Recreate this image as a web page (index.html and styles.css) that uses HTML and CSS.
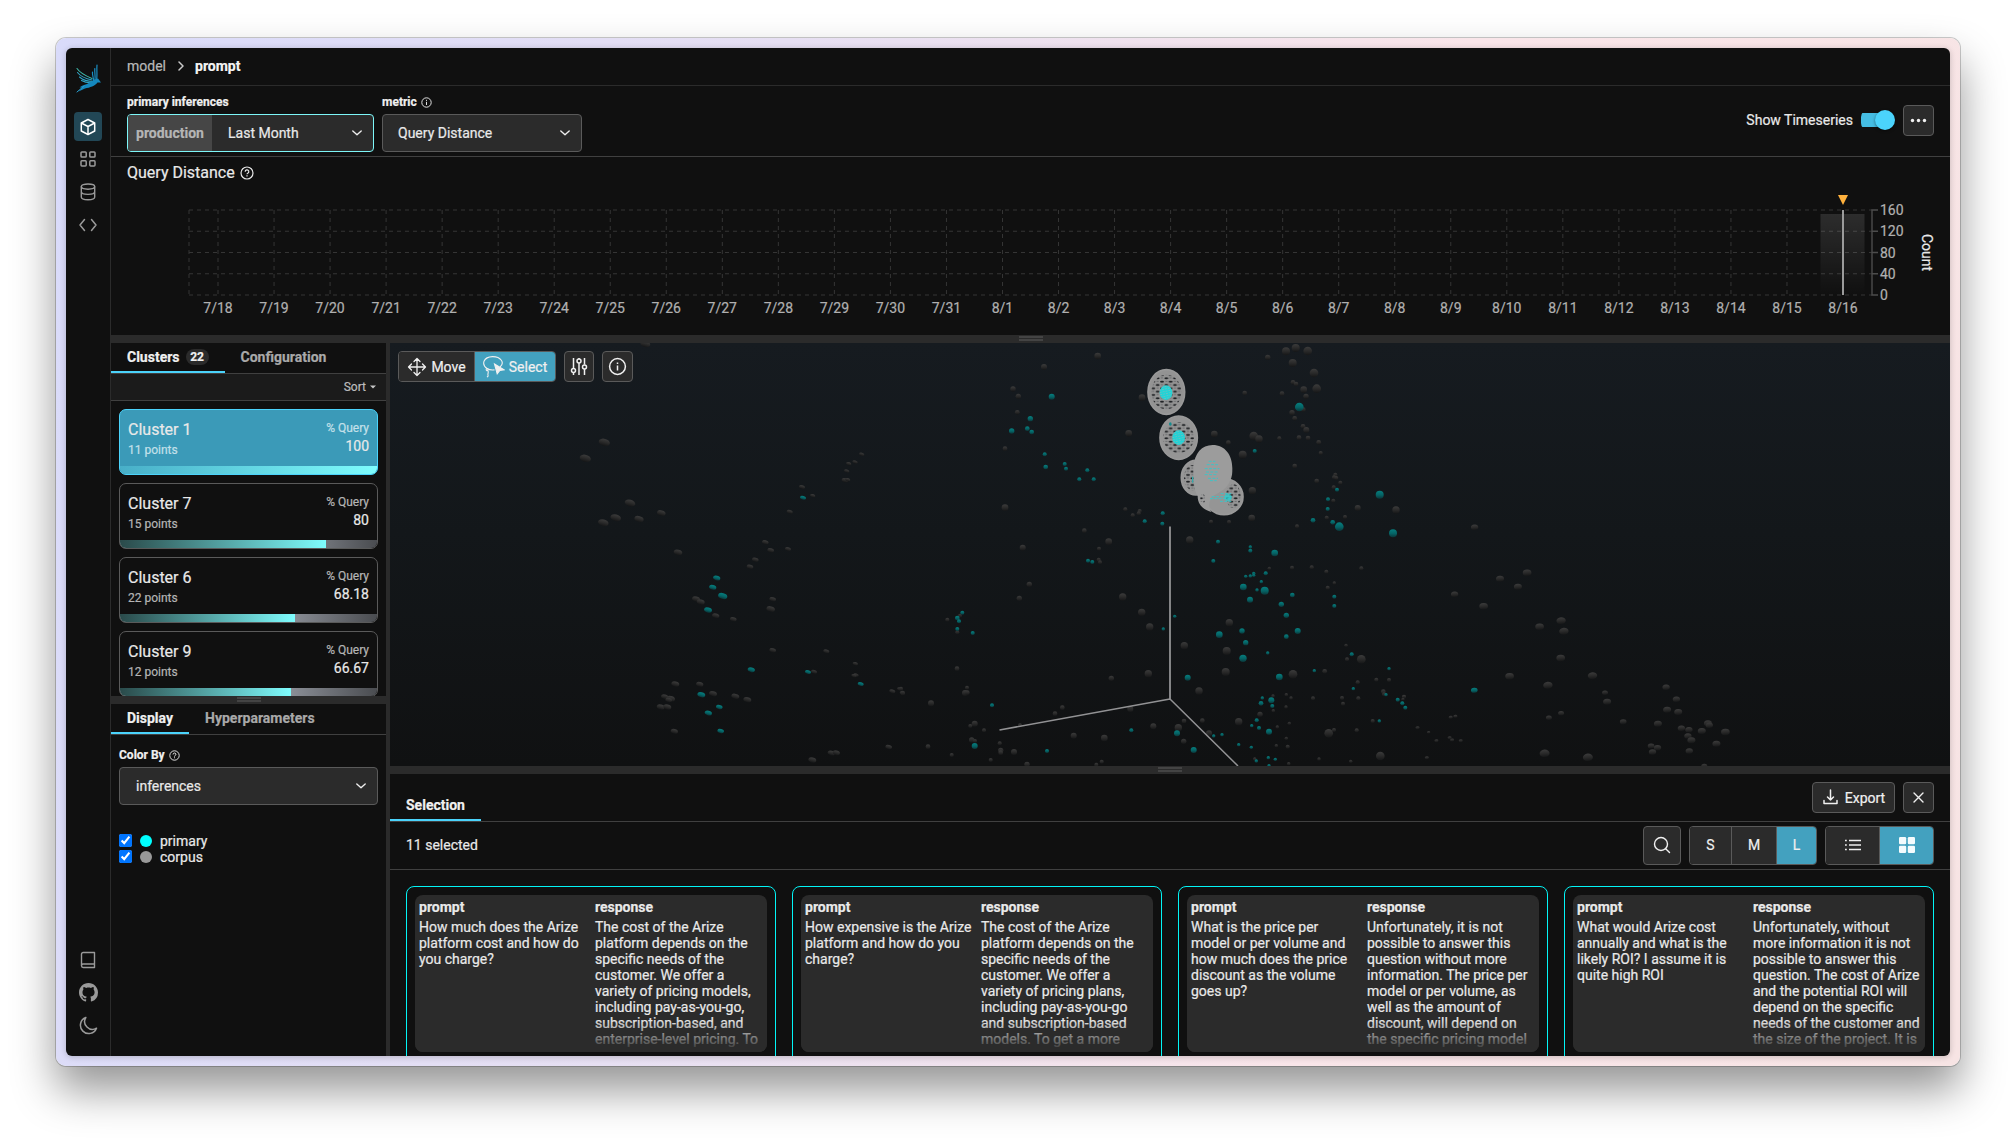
FILE: index.html
```html
<!DOCTYPE html>
<html lang="en">
<head>
<meta charset="utf-8">
<title>Phoenix</title>
<link rel="stylesheet" href="styles.css">
</head>
<body>
<div class="frame">
<div class="app">
  <nav class="side">
    <svg class="logo" width="27" height="30" viewBox="74 63 27 30" fill="none" stroke-linecap="round">
      <g stroke="#2ea3c4" stroke-width="1.1"><path d="M76 68.500C79 73 85 76 91 78.500" stroke="#3fb6a8"/><path d="M76.500 72.500C80 77 86 79 91 80"/><path d="M78.500 77C82 80 87 81.500 92 81.500"/><path d="M80.500 80.500C84 82.500 88 83 92 82.500"/></g>
      <g stroke="#1a8fc4" stroke-width="1.200"><path d="M96 65C95.500 70 96.500 76 95.500 80"/><path d="M93.800 68.500C93.500 73 94.500 76 94 80"/><path d="M91.500 72C91 76 93 78 92.500 81"/></g>
      <path d="M100 82.500L97 78.500C93 79 90 82 86 84C83 85 80 86 78.500 87.500L81 87.500L77.500 91.500L84 88.500C89 87.500 94 86 96.500 82.500Z" fill="#1488be"/>
      <path d="M76 92L83 86" stroke="#2b9fce"/>
    </svg>
    <div class="side-group">
      <span class="side-item active"><svg width="18" height="18" viewBox="0 0 18 18" fill="none" stroke="currentColor" stroke-width="1.500" stroke-linejoin="round"><path d="M9 1.500L15.700 5v8L9 16.500L2.300 13V5z"/><path d="M2.300 5L9 8.500L15.700 5M9 8.500v8"/></svg></span>
      <span class="side-item"><svg width="16" height="16" viewBox="0 0 16 16" fill="none" stroke="currentColor" stroke-width="1.500"><rect x="1" y=".9" width="5.200" height="5.200" rx=".9"/><rect x="9.800" y=".9" width="5.200" height="5.200" rx=".9"/><rect x="1" y="9.800" width="5.200" height="5.200" rx=".9"/><rect x="9.800" y="9.800" width="5.200" height="5.200" rx=".9"/></svg></span>
      <span class="side-item"><svg width="16" height="18" viewBox="0 0 16 18" fill="none" stroke="currentColor" stroke-width="1.400"><ellipse cx="8" cy="3.600" rx="6.700" ry="2.600"/><path d="M1.300 3.600v10.500c0 1.500 3 2.700 6.700 2.700s6.700-1.200 6.700-2.700V3.600M1.300 8.800c0 1.500 3 2.600 6.700 2.600s6.700-1.100 6.700-2.600"/></svg></span>
      <span class="side-item"><svg width="18" height="14" viewBox="0 0 18 14" fill="none" stroke="currentColor" stroke-width="1.500" stroke-linecap="round" stroke-linejoin="round"><path d="M5.500 1.500L1 7l4.500 5.500M12.500 1.500L17 7l-4.500 5.500"/></svg></span>
    </div>
    <div class="side-group bottom">
      <span class="side-item book"><svg width="16" height="18" viewBox="0 0 16 18" fill="none" stroke="currentColor" stroke-width="1.400" stroke-linejoin="round"><path d="M14.500 13H3.200C2.200 13 1.500 13.800 1.500 14.800S2.200 16.500 3.200 16.500H14.500V1.500H3.200C2.200 1.500 1.500 2.200 1.500 3.200v11.500"/></svg></span>
      <span class="side-item"><svg width="19" height="19" viewBox="0 0 16 16" fill="currentColor"><path d="M8 0C3.580 0 0 3.580 0 8c0 3.540 2.290 6.530 5.470 7.590.4.070.550-.170.550-.380 0-.190-.010-.820-.010-1.490-2.010.370-2.530-.490-2.690-.940-.090-.230-.480-.940-.820-1.130-.280-.150-.680-.520-.010-.530.630-.010 1.080.580 1.230.820.720 1.210 1.870.870 2.330.660.070-.520.280-.870.510-1.070-1.780-.2-3.640-.890-3.640-3.950 0-.870.310-1.590.820-2.150-.080-.2-.360-1.020.080-2.120 0 0 .670-.210 2.200.820.640-.180 1.320-.270 2-.270s1.360.090 2 .270c1.530-1.040 2.200-.820 2.200-.820.440 1.100.160 1.920.080 2.120.510.560.820 1.270.820 2.150 0 3.070-1.870 3.750-3.650 3.950.290.250.540.730.540 1.480 0 1.070-.010 1.930-.010 2.200 0 .210.150.460.550.380A8.010 8.010 0 0 0 16 8c0-4.420-3.580-8-8-8z"/></svg></span>
      <span class="side-item"><svg width="19" height="19" viewBox="0 0 19 19" fill="none" stroke="currentColor" stroke-width="1.500" stroke-linejoin="round"><path d="M6.800 1.500A8.300 8.300 0 1 0 17.500 12.200A7.800 7.800 0 0 1 6.800 1.500z"/></svg></span>
    </div>
  </nav>

  <div class="page">
    <header class="crumbs">
      <span>model</span>
      <svg width="6" height="10" viewBox="0 0 6 10" fill="none" stroke="#c8c8c8" stroke-width="1.500" stroke-linecap="round" stroke-linejoin="round"><path d="M1 1l4 4-4 4"/></svg>
      <b>prompt</b>
    </header>

    <div class="toolbar">
      <div class="field">
        <div class="label">primary inferences</div>
        <div class="select primary"><span class="addon">production</span><span class="value">Last Month</span><svg class="chev" width="12" height="12" viewBox="0 0 12 12"><path d="M1.800 4L6 7.800L10.200 4"/></svg></div>
      </div>
      <div class="field">
        <div class="label">metric <svg width="11" height="11" viewBox="0 0 11 11" fill="none" stroke="#e0e0e0"><circle cx="5.500" cy="5.500" r="4.700"/><path d="M5.500 4.800V8M5.500 2.800v1.100"/></svg></div>
        <div class="select metric"><span class="value">Query Distance</span><svg class="chev" width="12" height="12" viewBox="0 0 12 12"><path d="M1.800 4L6 7.800L10.200 4"/></svg></div>
      </div>
      <div class="tool-right">
        <span>Show Timeseries</span>
        <span class="toggle"><span class="knob"></span></span>
        <button class="btn square"><svg width="17" height="5" viewBox="0 0 17 5" fill="#f2f2f2"><circle cx="2.500" cy="2.500" r="1.700"/><circle cx="8.500" cy="2.500" r="1.700"/><circle cx="14.500" cy="2.500" r="1.700"/></svg></button>
      </div>
    </div>

    <section class="chart">
      <h1>Query Distance <svg width="14" height="14" viewBox="0 0 14 14" fill="none" stroke="#e8e8e8" stroke-width="1.200"><circle cx="7" cy="7" r="6"/><path d="M5.200 5.700a1.800 1.800 0 1 1 2.600 1.500q-.8.400-.8 1.100M7 9.300v1.200"/></svg></h1>
      <svg class="plot" id="plot" width="1839" height="154" viewBox="111 181 1839 154">
        <defs><linearGradient id="bar" x1="0" y1="0" x2="0" y2="1"><stop offset="0" stop-color="#fff" stop-opacity=".12"/><stop offset="1" stop-color="#fff" stop-opacity="0"/></linearGradient></defs>
        <g id="grid" class="grid"></g>
        <rect x="1820.500" y="214" width="44" height="81" fill="url(#bar)"/>
        <path d="M1878 210h-6v85h6M1872 231.250h6M1872 252.500h6M1872 273.750h6" class="axis"/>
        <path d="M1843 210v85" stroke="#9b9b9b" stroke-width="2"/>
        <path d="M1838 195h10l-5 10z" fill="#ffb13d"/>
        <g id="ticks" class="ticks"></g>
        <text class="count" transform="translate(1922 252.500) rotate(90)">Count</text>
      </svg>
    </section>
    <div class="handle"><i></i></div>

    <div class="body">
      <aside class="left">
        <section class="clusters">
          <div class="tabs"><span class="tab on">Clusters <em>22</em></span><span class="tab">Configuration</span></div>
          <div class="sort">Sort <svg width="6" height="4" viewBox="0 0 6 4"><path d="M0 .5h6L3 3.500z" fill="#c8c8c8"/></svg></div>
          <div class="list">
            <div class="cluster sel"><div class="info"><div><h2>Cluster 1</h2><p>11 points</p></div><div class="num"><p>% Query</p><strong>100</strong></div></div><div class="bar"><span style="width:100%"></span></div></div>
            <div class="cluster"><div class="info"><div><h2>Cluster 7</h2><p>15 points</p></div><div class="num"><p>% Query</p><strong>80</strong></div></div><div class="bar"><span style="width:80%"></span></div></div>
            <div class="cluster"><div class="info"><div><h2>Cluster 6</h2><p>22 points</p></div><div class="num"><p>% Query</p><strong>68.18</strong></div></div><div class="bar"><span style="width:68.180%"></span></div></div>
            <div class="cluster"><div class="info"><div><h2>Cluster 9</h2><p>12 points</p></div><div class="num"><p>% Query</p><strong>66.67</strong></div></div><div class="bar"><span style="width:66.670%"></span></div></div>
          </div>
        </section>
        <div class="handle"><i></i></div>
        <section class="display">
          <div class="tabs"><span class="tab on">Display</span><span class="tab">Hyperparameters</span></div>
          <div class="display-body">
            <div class="label">Color By <svg width="11" height="11" viewBox="0 0 14 14" fill="none" stroke="#e8e8e8" stroke-width="1.200"><circle cx="7" cy="7" r="6"/><path d="M5.200 5.700a1.800 1.800 0 1 1 2.600 1.500q-.8.400-.8 1.100M7 9.300v1.200"/></svg></div>
            <div class="select"><span class="value">inferences</span><svg class="chev" width="12" height="12" viewBox="0 0 12 12"><path d="M1.800 4L6 7.800L10.200 4"/></svg></div>
            <div class="legend">
              <label><input type="checkbox" checked><i class="dot cyan"></i>primary</label>
              <label><input type="checkbox" checked><i class="dot gray"></i>corpus</label>
            </div>
          </div>
        </section>
      </aside>
      <div class="vhandle"></div>

      <main class="right">
        <div class="cloud">
          <svg class="points" width="1560" height="423" viewBox="0 0 1560 423">
            <defs>
              <linearGradient id="gr" x1="0" y1="0" x2="0" y2="1"><stop offset="0" stop-color="#3b3b3b"/><stop offset=".5" stop-color="#2a2a2a"/><stop offset="1" stop-color="#151617"/></linearGradient>
              <linearGradient id="te" x1="0" y1="0" x2="0" y2="1"><stop offset="0" stop-color="#067e7e"/><stop offset=".55" stop-color="#056365"/><stop offset="1" stop-color="#0b3538"/></linearGradient>
              <pattern id="mesh" width="26" height="20" patternUnits="userSpaceOnUse"><g fill="#1f2124"><ellipse cx="6" cy="5" rx="6" ry="3"/><ellipse cx="19" cy="15" rx="6" ry="3"/></g><path d="M16 4h6M2 14h7" stroke="#55585b" stroke-width="2"/></pattern>
              <pattern id="lines" width="9" height="7" patternUnits="userSpaceOnUse" patternTransform="rotate(-12)"><path d="M0 1h6" stroke="#8fb4b4" stroke-width="1.800"/></pattern>
            </defs>
            <g id="cloud"></g>
            <g class="axes"><path d="M780 183.500V356" stroke-width="1.800"/><path d="M609.500 387L780 356M780 356L848 423" stroke-width="1.500"/></g>
            <g transform="translate(510 -3) scale(.33333)" id="spheres">
              <g stroke="#999" stroke-width="5">
                <ellipse cx="799" cy="156" rx="55" ry="67" fill="#939393"/><ellipse cx="799" cy="156" rx="45" ry="52" fill="url(#mesh)" stroke="none"/>
                <ellipse cx="836" cy="293" rx="56" ry="65" fill="#959595"/><ellipse cx="836" cy="293" rx="46" ry="46" fill="url(#mesh)" stroke="none"/>
                <ellipse cx="888" cy="413" rx="44" ry="52" fill="#959595"/><ellipse cx="878" cy="413" rx="26" ry="38" fill="url(#mesh)" stroke="none"/>
                <ellipse cx="972" cy="470" rx="57" ry="54" fill="#959595"/><ellipse cx="1000" cy="468" rx="22" ry="36" fill="url(#mesh)" stroke="none"/>
              </g>
              <path d="M938 315C975 315 997 345 997 385C997 400 997 410 990 422C985 440 965 455 935 470C925 490 925 505 935 516C905 508 893 490 893 468C880 450 880 405 880 380C884 340 905 315 938 315z" fill="#9c9c9c"/>
              <ellipse cx="908" cy="476" rx="7" ry="14" fill="url(#mesh)"/>
              <g fill="#22d3d6"><ellipse cx="798" cy="158" rx="19" ry="22"/><ellipse cx="836" cy="293" rx="19" ry="22"/></g>
              <g fill="url(#lines)"><ellipse cx="798" cy="158" rx="19" ry="22"/><ellipse cx="836" cy="293" rx="19" ry="22"/></g>
              <g stroke="#3fc3c6" stroke-width="3" stroke-dasharray="9 4" fill="none"><path d="M926 364h20M920 374h34M914 386h44M918 396h36M914 404h38M924 415h30M930 422h20"/><path d="M962 461h32M935 470h60M930 476h66M960 484h34"/></g>
              <ellipse cx="984" cy="472" rx="11" ry="11" fill="#27cfd2" opacity=".7"/><path d="M878 410v18" stroke="#3aa" stroke-width="4"/>
              <ellipse cx="811" cy="252" rx="4" ry="5" fill="#158d90"/>
            </g>
          </svg>
          <div class="cloud-tools">
            <div class="group">
              <button class="btn"><svg width="20" height="20" viewBox="0 0 20 20" fill="none" stroke="currentColor" stroke-width="1.300" stroke-linecap="round" stroke-linejoin="round"><path d="M10 1.500v17M1.500 10h17M7 4.500l3-3 3 3M7 15.500l3 3 3-3M4.500 7l-3 3 3 3M15.500 7l3 3-3 3"/></svg>Move</button>
              <button class="btn on"><svg width="23" height="23" viewBox="0 0 23 23" fill="none" stroke="currentColor" stroke-width="1.100"><path d="M5 13.500C-1 9 1.500 2 10.500 1.600C19 1.500 23 8 18 12M5 13.500c2 1.400 4.500 1.700 7.500 1.400"/><path d="M5 13.500c-1.500.5-.8 2.500.5 2s.4-2-.5-2M5.800 15.500c1.500 2-.5 3 .2 4.500s-.5 1.500-1 2"/><path d="M12.500 9l9.500 5.800-4.200.6-2.600 3.400z" fill="currentColor"/></svg>Select</button>
            </div>
            <button class="btn square30"><svg width="18" height="19" viewBox="0 0 18 19" fill="none" stroke="currentColor" stroke-width="1.500"><path d="M3.500 1v10.500M3.500 16v2M9 1v1M9 6v12M14.500 1v6.500M14.500 12v6"/><circle cx="3.500" cy="13.500" r="2"/><circle cx="9" cy="4" r="2"/><circle cx="14.500" cy="10" r="2"/></svg></button>
            <button class="btn square"><svg width="19" height="19" viewBox="-.5 -.5 19 19" fill="none" stroke="currentColor" stroke-width="1.500"><circle cx="9" cy="9" r="7.900"/><path d="M9 8v5M9 5v1.600"/></svg></button>
          </div>
        </div>
        <div class="handle"><i></i></div>
        <section class="selection">
          <div class="tabs tall"><span class="tab on">Selection</span>
            <div class="actions"><button class="btn export"><svg width="17" height="17" viewBox="-.5 0 17 17" fill="none" stroke="currentColor" stroke-width="1.500" stroke-linecap="round" stroke-linejoin="round"><path d="M8 1v10M5 8l3 3 3-3M1.500 11.500v3h13v-3"/></svg>Export</button><button class="btn square"><svg width="13" height="13" viewBox="0 0 13 13" stroke="currentColor" stroke-width="1.400" stroke-linecap="round"><path d="M2 2l9 9M11 2l-9 9"/></svg></button></div>
          </div>
          <div class="subbar">
            <span class="grow">11 selected</span>
            <button class="btn search"><svg width="18" height="18" viewBox="0 0 18 18" fill="none" stroke="currentColor" stroke-width="1.400" stroke-linecap="round"><circle cx="8" cy="8" r="6.500"/><path d="M12.700 12.700L16.500 16.500"/></svg></button>
            <div class="group sizes"><button class="btn s">S</button><button class="btn m">M</button><button class="btn l on">L</button></div>
            <div class="group views"><button class="btn"><svg width="16" height="12" viewBox="0 0 16 12" stroke="currentColor" stroke-width="1.500"><path d="M4 1.500h12M4 6h12M4 10.500h12M0 1.500h1.800M0 6h1.800M0 10.500h1.800"/></svg></button><button class="btn on"><svg width="16" height="16" viewBox="0 0 16 16" fill="#f4fbfd"><rect width="7.200" height="7.200" rx="1.300"/><rect x="8.800" width="7.200" height="7.200" rx="1.300"/><rect y="8.800" width="7.200" height="7.200" rx="1.300"/><rect x="8.800" y="8.800" width="7.200" height="7.200" rx="1.300"/></svg></button></div>
          </div>
          <div class="cards">
            <article><div class="doc"><div><b>prompt</b><p>How much does the Arize platform cost and how do you charge?</p></div><div><b>response</b><p>The cost of the Arize platform depends on the specific needs of the customer. We offer a variety of pricing models, including pay-as-you-go, subscription-based, and enterprise-level pricing. To</p></div></div></article>
            <article><div class="doc"><div><b>prompt</b><p>How expensive is the Arize platform and how do you charge?</p></div><div><b>response</b><p>The cost of the Arize platform depends on the specific needs of the customer. We offer a variety of pricing plans, including pay-as-you-go and subscription-based models. To get a more</p></div></div></article>
            <article><div class="doc"><div><b>prompt</b><p>What is the price per model or per volume and how much does the price discount as the volume goes up?</p></div><div><b>response</b><p>Unfortunately, it is not possible to answer this question without more information. The price per model or per volume, as well as the amount of discount, will depend on the specific pricing model</p></div></div></article>
            <article><div class="doc"><div><b>prompt</b><p>What would Arize cost annually and what is the likely ROI? I assume it is quite high ROI</p></div><div><b>response</b><p>Unfortunately, without more information it is not possible to answer this question. The cost of Arize and the potential ROI will depend on the specific needs of the customer and the size of the project. It is</p></div></div></article>
          </div>
        </section>
      </main>
    </div>
  </div>
</div>
</div>
<script src="charts.js"></script>
</body>
</html>
```
FILE: styles.css
```css
* { box-sizing: border-box; }
body { margin: 0; width: 2016px; height: 1140px; padding: 38px 56px; background: #fff; overflow: hidden; font: 14px/16px Roboto, "Liberation Sans", sans-serif; color: #e9e9e9; -webkit-text-stroke: .2px; }
h1, h2, p { margin: 0; font-weight: 400; }
svg { display: block; flex: none; }
button { font: inherit; color: inherit; margin: 0; }

.frame { width: 1904px; height: 1028px; padding: 10px; border-radius: 10px; background: linear-gradient(100deg, #d9dbfa 0%, #e6dff2 35%, #f9e5e9 68%, #f7e4e4 100%); box-shadow: 0 0 0 1px rgba(0,0,0,.2), 0 24px 44px rgba(0,0,0,.42); }
.app { width: 1884px; height: 1008px; display: flex; overflow: hidden; border-radius: 6px; background: #101010; box-shadow: 0 1px 6px rgba(0,0,0,.2); }

.side { width: 45px; border-right: 1px solid #2b2b2b; display: flex; flex-direction: column; align-items: center; padding: 15px 0 17px; flex: none; }
.logo { margin-bottom: 19px; }
.side-group { display: flex; flex-direction: column; gap: 5px; }
.side-group.bottom { margin-top: auto; }
.side-item { width: 28px; height: 28px; border-radius: 4px; display: flex; align-items: center; justify-content: center; color: #9a9a9a; }
.side-item.active { background: #224756; color: #fff; height: 29px; margin-bottom: -1px; }
.side-item.book { padding-top: 2px; }

.page { flex: 1; display: flex; flex-direction: column; min-width: 0; }
.crumbs { height: 38px; flex: none; border-bottom: 1px solid #2b2b2b; padding: 0 0 2px 16px; display: flex; align-items: center; color: #b8b8b8; }
.crumbs svg { margin: 0 11px 0 12px; }
.crumbs b { color: #f4f4f4; font-weight: 700; }

.toolbar { height: 71px; flex: none; border-bottom: 1px solid #404040; padding: 8px 16px 4px; display: flex; gap: 8px; }
.label { height: 16px; margin-bottom: 4px; font-size: 12px; font-weight: 700; display: flex; align-items: center; gap: 4px; color: #f0f0f0; }
.select { height: 38px; border: 1px solid #5a5a5a; border-radius: 4px; background: #2b2b2b; display: flex; align-items: center; padding-right: 10px; overflow: hidden; }
.select .value { flex: 1; padding-left: 16px; }
.select.primary { width: 247px; border-color: #7df6f8; }
.select.metric { width: 200px; }
.select.metric .value { padding-left: 15px; }
.addon { height: 100%; width: 84px; padding-left: 8px; background: #464646; color: #b5b5b5; font-weight: 700; display: flex; align-items: center; }
.chev { fill: none; stroke: #ededed; stroke-width: 1.4; stroke-linecap: round; stroke-linejoin: round; }
.tool-right { margin: -8px 0 -3px auto; padding-bottom: 1px; display: flex; align-items: center; }
.toggle { width: 34px; height: 20px; margin: 0 8px; display: flex; align-items: center; justify-content: flex-end; background: linear-gradient(#45bde3, #45bde3) 0 50% / 30px 14px no-repeat; border-radius: 7px 10px 10px 7px; }
.knob { width: 20px; height: 20px; border-radius: 50%; background: #4bd3fb; box-shadow: 0 1px 3px rgba(0,0,0,.5); }

.btn { height: 31px; padding: 0; border: 1px solid #5a5a5a; border-radius: 4px; background: #2b2b2b; color: #f0f0f0; display: flex; align-items: center; justify-content: center; flex: none; }
.square { width: 31px; }
.square30 { width: 30px; }
.group { display: flex; border: 1px solid #5a5a5a; border-radius: 4px; overflow: hidden; }
.group .btn { border: 0; border-radius: 0; height: 100%; }
.group .btn + .btn { border-left: 1px solid #5a5a5a; }
.btn.on { background: #43a1bf; }

.chart { height: 178px; flex: none; padding-top: 8px; }
.chart h1 { height: 16px; font-size: 16px; display: flex; align-items: center; gap: 5px; padding-left: 16px; }
.grid { stroke: #353535; stroke-dasharray: 4 4; fill: none; }
.axis { stroke: #4c4c4c; stroke-width: 1.4; fill: none; }
.ticks text { fill: #b0b0b0; stroke: #b0b0b0; stroke-width: .2px; font-size: 14px; }
.count { fill: #e9e9e9; stroke: #e9e9e9; stroke-width: .2px; font-size: 14px; text-anchor: middle; }

.handle { height: 8px; flex: none; background: #2b2b2b; display: flex; justify-content: center; padding-top: 2px; }
.handle i { width: 24px; height: 5px; border: solid #444; border-width: 2px 0; margin-top: -1px; }
.body { flex: 1; display: flex; min-height: 0; }
.left { width: 275px; flex: none; display: flex; flex-direction: column; }
.vhandle { width: 4px; background: #2b2b2b; flex: none; }

.tabs { height: 31px; flex: none; border-bottom: 1px solid #404040; display: flex; align-items: flex-end; }
.tab { height: 30px; padding: 0 16px; border-bottom: 2px solid transparent; font-weight: 700; color: #a9a9a9; display: flex; align-items: center; gap: 6px; }
.tab.on { color: #f0f0f0; border-color: #4bd3fb; }
.tab em { font-style: normal; font-size: 12px; width: 23px; text-align: center; border-radius: 8px; background: #2b2b2b; }

.clusters { height: 353px; flex: none; display: flex; flex-direction: column; overflow: hidden; }
.sort { height: 27px; flex: none; background: #1b1b1b; border-bottom: 1px solid #404040; display: flex; align-items: center; justify-content: flex-end; gap: 4px; padding-right: 10px; font-size: 12px; color: #bdbdbd; }
.list { padding: 8px; display: flex; flex-direction: column; gap: 8px; }
.cluster { height: 66px; flex: none; border: 1px solid #5a5a5a; border-radius: 7px; overflow: hidden; display: flex; flex-direction: column; }
.info { flex: 1; display: flex; justify-content: space-between; padding: 10px 8px 0; }
.info p { font-size: 12px; line-height: 14px; color: #b5b5b5; }
.info h2 { font-size: 16px; line-height: 19px; }
.info h2 + p { margin-top: 4px; }
.num { text-align: right; padding-top: 1px; }
.num strong { display: block; font-weight: 400; line-height: 16px; margin-top: 3px; }
.bar { height: 8px; background: linear-gradient(90deg, #c5c9d2 0%, #8b8f97 66%, #4a4c50 100%); }
.bar span { display: block; height: 100%; background: linear-gradient(90deg, #2a4a4a, #7efcfd); }
.sel { background: #3b9ab8; border-color: #4bd3fb; }
.sel .info p { color: #c4e0ea; }
.sel .bar span { background: linear-gradient(90deg, #48afc8, #7efcfd); }

.display-body { padding: 12px 8px; }
.legend { margin-top: 28px; display: flex; flex-direction: column; }
.legend label { display: flex; align-items: center; height: 16px; }
.legend input { margin: 0 8px 2px 0; width: 13px; height: 13px; }
.dot { width: 12px; height: 12px; border-radius: 50%; margin-right: 8px; }
.cyan { background: #0ff; }
.gray { background: #999; }

.right { flex: 1; display: flex; flex-direction: column; min-width: 0; }
.cloud { height: 423px; flex: none; position: relative; background: linear-gradient(#161b20, #13171a 45%, #101112); }
.axes { stroke: #929294; fill: none; }
.cloud-tools { position: absolute; left: 8px; top: 8px; display: flex; gap: 8px; }
.cloud-tools .group { width: 158px; height: 31px; }
.cloud-tools .group .btn { width: 75px; gap: 4px; }
.cloud-tools .group .btn.on { width: 81px; padding-right: 1px; }

.selection { flex: 1; display: flex; flex-direction: column; min-height: 0; }
.tabs.tall { height: 48px; }
.actions { margin-left: auto; align-self: flex-start; padding: 8px 16px 0 0; display: flex; gap: 8px; }
.export { width: 83px; gap: 6px; }
.subbar { height: 48px; flex: none; border-bottom: 1px solid #404040; display: flex; align-items: center; padding: 0 16px; gap: 8px; }
.grow { flex: 1; padding-bottom: 1px; }
.search { width: 38px; height: 39px; }
.subbar .group { height: 39px; }
.subbar .btn { padding-bottom: 1px; }
.subbar .s { width: 41px; }
.subbar .m { width: 45px; }
.subbar .l { width: 40px; }
.views .btn { width: 53px; }
.views .btn.on { width: 54px; }
.cards { flex: 1; min-height: 0; overflow: hidden; padding: 16px 16px 0; display: grid; grid-template-columns: repeat(4, 370px); gap: 16px; grid-auto-rows: 220px; }
.cards article { border: 1px solid #03f4f5; border-radius: 8px; padding: 8px; }
.doc { height: 157px; border-radius: 8px; background: #2b2b2b; overflow: hidden; display: grid; grid-template-columns: 1fr 1fr; position: relative; }
.doc > div { padding: 4px; }
.doc b { display: block; padding: 0 0 4px; }
.doc::after { content: ""; position: absolute; left: 0; right: 0; bottom: 0; height: 32px; background: linear-gradient(rgba(43,43,43,0), #2b2b2b); }
```
FILE: charts.js
```js
const NS = 'http://www.w3.org/2000/svg';
function add(parent, tag, attrs, text) {
  const el = document.createElementNS(NS, tag);
  for (const k in attrs) el.setAttribute(k, attrs[k]);
  if (text !== undefined) el.textContent = text;
  parent.appendChild(el);
  return el;
}

// Time series grid and tick labels
const grid = document.getElementById('grid');
const ticks = document.getElementById('ticks');
for (let i = 0; i < 5; i++) {
  const y = 210 + i * 21.25;
  add(grid, 'path', { d: `M189 ${y}H1872` });
  add(ticks, 'text', { x: 1880, y: y + 5 }, String(160 - i * 40));
}
add(grid, 'path', { d: 'M189 210V295' });
for (let i = 0; i < 30; i++) {
  const x = 218 + i * 56.035;
  const day = i < 14 ? `7/${18 + i}` : `8/${i - 13}`;
  add(grid, 'path', { d: `M${x} 210V295` });
  add(ticks, 'text', { x, y: 313, 'text-anchor': 'middle' }, day);
}

// Embedding points, grouped by the part of the scene they lie in: x y radius
const scene = document.getElementById('cloud');
const parts = [
  { x: 0, sx: 3, flat: 0.62, tilt: 14,
    corpus: '766 12 15,643 307 17,586 355 17,720 489 16,814 519 13,677 533 16,640 548 16,747 537 14,864 637 13,1415 343 8,1395 366 8,1376 371 8,1370 393 8,1365 421 10,1373 419 8,1236 441 9,1268 467 8,1199 515 9,1126 607 10,1142 631 10,1194 627 9,1096 659 10,1080 680 10,918 777 12,932 786 12,977 827 11,1030 838 10,1148 778 10,1142 807 13,1148 931 10,1309 934 9,1396 971 8,1398 1005 8,1392 1007 8,1272 995 9,856 1032 12,929 1033 11,969 1061 12,824 1070 11,842 1076 13,836 1080 10,812 1101 12,832 1101 12,1036 1069 12,1072 1079 12,853 1174 11,1507 1054 9,1529 1047 8,1537 1059 8,1496 1221 10,1324 1239 11,1339 1238 11,1267 1260 12',
    primary: '1239 473 9,980 714 11,968 742 11,998 768 14,954 810 12,1084 989 11,1254 996 9,1412 1032 9,934 1064 12,988 1101 10,955 1119 11,992 1173 10' },
  { x: 510, sx: 3, flat: 1, tilt: 0,
    corpus: '593 48 10,432 81 9,339 147 8,355 169 8,352 217 7,315 326 7,726 173 10,686 280 10,943 282 10,985 308 7,1158 34 12,1187 24 12,1223 33 13,1103 52 8,1178 69 12,1242 99 13,1179 127 7,1188 132 7,1250 146 13,1211 149 10,1218 169 8,1146 161 7,1034 159 7,1176 218 8,1210 209 7,1184 235 7,1209 259 7,1219 270 9,1061 288 13,1077 297 11,1138 295 6,1197 293 7,1224 294 7,1256 307 7,1028 344 12,1262 339 6,1184 378 7,1306 404 6,1302 412 6,1309 414 6,1321 428 6,1301 442 6,1250 423 7,1057 452 11,1300 482 6,1373 504 9,1488 510 11,1280 533 6,1335 531 6,1191 559 6,1055 534 10,315 503 10,676 508 6,719 513 6,716 520 6,698 526 6,933 545 6,987 546 6,553 572 7,626 605 10,869 600 11,368 623 9,597 626 6,596 659 6,600 667 6,388 733 8,358 775 8,668 771 11,725 817 11,749 861 11,988 848 11,142 839 6,180 827 6,172 877 6,853 917 11,980 933 12,171 986 7,977 996 12,1179 1003 13,745 1001 11,634 1015 8,897 1053 11,201 1043 6,195 1059 9,202 1058 7,93 1090 9,3 1046 6,8 1059 7,487 1103 7,465 1121 7,691 1107 9,360 1156 6,224 1151 9,211 1158 6,252 1171 6,760 1159 9,835 1163 11,852 1143 7,907 1142 7,1016 1145 11,1080 1123 8,927 1180 9,613 1194 10,521 1187 9,851 1204 8,215 1200 8,225 1203 6,84 1220 7,299 1210 6,302 1231 8,302 1238 7,342 1236 9,155 1245 6,272 1260 6,381 1273 8,589 1274 6,605 1265 6,1108 685 5,1176 683 6,1235 682 6,1279 695 6,1384 685 6,1303 729 5,1283 743 6,1338 916 5,1341 958 6,1384 958 13,1274 994 7,1429 1019 6,1467 1020 6,1373 1027 6,1119 1068 5,1159 1064 5,1173 1074 5,1158 1101 5,1120 1112 5,1239 1075 6,1326 1074 6,1375 1075 6,1329 1091 6,1450 1055 7,1452 1063 6,1512 1070 6,1168 1150 5,1132 1161 5,1159 1195 5,1129 1217 5,1163 1220 6,1302 1170 6,1286 1180 13,1370 1171 6,1418 1143 6,1441 1248 13,1257 1257 5,1352 1264 5,1166 1271 5,1064 1257 5',
    primary: '455 170 9,391 236 8,335 273 8,382 266 7,395 276 7,434 343 6,437 381 7,494 372 6,498 386 6,562 391 6,538 418 6,581 418 6,1198 201 13,1064 333 6,1311 449 6,1284 478 6,1283 507 6,1298 547 7,1318 560 13,1439 464 12,1479 580 12,1239 541 7,788 520 6,734 544 6,787 551 6,954 605 6,940 663 6,1051 621 5,1051 632 6,1124 639 10,564 662 6,577 666 6,1037 709 5,1051 708 5,1061 700 5,1061 706 5,1097 700 6,1084 725 5,1030 741 10,1094 752 12,1071 750 5,1050 779 9,1177 765 7,1144 793 8,1159 826 8,1303 770 6,1303 798 6,187 818 6,172 834 7,177 844 6,172 867 6,218 879 6,824 829 5,790 867 5,958 884 10,1026 873 8,1037 908 8,1193 873 9,1159 890 7,1029 955 11,1103 939 5,1355 943 6,863 1013 9,1138 1011 10,1243 992 5,1467 986 5,1360 1046 5,276 1096 6,1114 1081 9,1087 1074 5,1083 1090 7,1117 1098 6,1070 1141 6,1055 1157 5,1077 1164 6,1107 1175 9,831 1180 9,694 1171 6,941 1188 5,966 1184 5,1016 1214 5,1054 1222 5,224 1218 9,441 1233 6,881 1230 9,1105 1253 5,1126 1258 5,1069 1263 5,1107 1277 5,1438 1143 5,1458 1064 5,1493 1079 6,1507 1090 6,1516 1103 6' },
  { x: 1010, sx: 2.8, flat: 0.75, tilt: -4,
    corpus: '209 562 11,356 698 13,280 716 12,330 740 12,153 763 11,234 799 13,451 842 14,391 860 13,459 874 14,450 954 13,307 1009 13,539 1007 14,414 1036 14,574 1058 9,580 1085 12,451 1120 9,417 1133 9,625 1145 10,745 1042 11,774 1078 11,748 1109 12,779 1116 12,722 1151 12,788 1165 11,809 1169 11,845 1173 12,862 1150 12,866 1156 11,911 1176 13,806 1188 11,816 1201 12,886 1211 12,703 1218 10,721 1223 11,707 1236 11,810 1233 11,405 1240 15,526 1252 15,11 1070 6,8 1078 5,142 1132 6,155 1129 6,49 1163 6,80 1177 5,102 1202 6,139 1193 6,146 1200 6,170 1202 6,75 1253 6,852 1278 9',
    primary: '208 1051 10' }
];
for (const part of parts) {
  for (const [kind, fill] of [['corpus', 'url(#gr)'], ['primary', 'url(#te)']]) {
    for (const item of part[kind].split(',')) {
      const [px, py, r] = item.split(' ').map(Number);
      const cx = part.x + px / part.sx;
      const cy = py / 3 - 3;
      add(scene, 'ellipse', { cx: cx.toFixed(1), cy: cy.toFixed(1), rx: (r / 3).toFixed(2), ry: (r * part.flat / 3).toFixed(2), fill, transform: `rotate(${part.tilt} ${cx.toFixed(1)} ${cy.toFixed(1)})` });
    }
  }
}
```
